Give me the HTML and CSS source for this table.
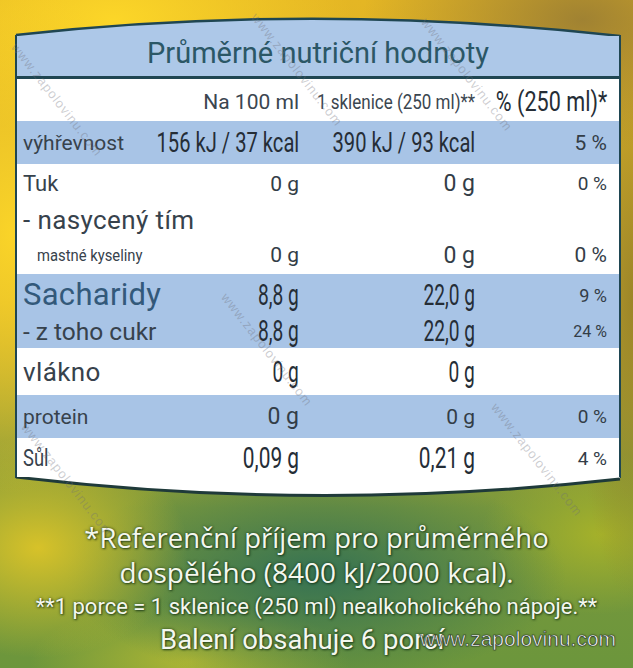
FILE: index.html
```html
<!DOCTYPE html>
<html lang="cs">
<head>
<meta charset="utf-8">
<title>Průměrné nutriční hodnoty</title>
<link rel="stylesheet" href="styles.css">
</head>
<body>
<div class="page">
  <svg class="cap cap-top" width="606" height="20" viewBox="0 0 606 20">
    <path d="M1 19 Q 300 -14 605 20 L605 20 L1 20 Z" fill="#adc8e8"/>
    <path d="M1 19 Q 300 -14 605 20" fill="none" stroke="#1f4652" stroke-width="2.5"/>
  </svg>
  <div class="card">
    <div class="title">Průměrné nutriční hodnoty</div>
    <div class="row head">
      <span></span>
      <span class="v n21">Na 100 ml</span>
      <span class="v"><span class="cond sk">1 sklenice (250 ml)**</span></span>
      <span class="v"><span class="cond pc">% (250 ml)*</span></span>
    </div>
    <div class="row band energy">
      <span class="lab s21">výhřevnost</span>
      <span class="v"><span class="cond kj">156 kJ / 37 kcal</span></span>
      <span class="v"><span class="cond kj">390 kJ / 93 kcal</span></span>
      <span class="v n20">5 %</span>
    </div>
    <div class="row tuk">
      <span class="lab s22">Tuk</span>
      <span class="v n20">0 g</span>
      <span class="v n22">0 g</span>
      <span class="v n18">0 %</span>
    </div>
    <div class="row nas">
      <span class="lab s26 wide">- nasycený tím</span>
    </div>
    <div class="row mast">
      <span class="lab"><span class="condl mk">mastné kyseliny</span></span>
      <span class="v n20">0 g</span>
      <span class="v n22">0 g</span>
      <span class="v n20">0 %</span>
    </div>
    <div class="band sach">
      <div class="row sub1">
        <span class="lab s31 blue">Sacharidy</span>
        <span class="v"><span class="cond c27">8,8 g</span></span>
        <span class="v"><span class="cond c27">22,0 g</span></span>
        <span class="v n17">9 %</span>
      </div>
      <div class="row sub2">
        <span class="lab s24">- z toho cukr</span>
        <span class="v"><span class="cond c27">8,8 g</span></span>
        <span class="v"><span class="cond c27">22,0 g</span></span>
        <span class="v n15">24 %</span>
      </div>
    </div>
    <div class="row vlak">
      <span class="lab s26">vlákno</span>
      <span class="v"><span class="cond c27">0 g</span></span>
      <span class="v"><span class="cond c27">0 g</span></span>
      <span class="v"></span>
    </div>
    <div class="row band prot">
      <span class="lab s21">protein</span>
      <span class="v n22">0 g</span>
      <span class="v n20">0 g</span>
      <span class="v n18">0 %</span>
    </div>
    <div class="row sul">
      <span class="lab"><span class="condl sl">Sůl</span></span>
      <span class="v"><span class="cond c28">0,09 g</span></span>
      <span class="v"><span class="cond c28">0,21 g</span></span>
      <span class="v n18">4 %</span>
    </div>
  </div>
  <svg class="cap cap-bottom" width="606" height="22" viewBox="0 0 606 22">
    <path d="M1 0 Q 300 36 605 2 L605 0 Z" fill="#ffffff"/>
    <path d="M1 0 Q 300 36 605 2" fill="none" stroke="#1f3a3a" stroke-width="3"/>
  </svg>
  <div class="foot">
    <p class="f1">*Referenční příjem pro průměrného</p>
    <p class="f2">dospělého (8400 kJ/2000 kcal).</p>
    <p class="f3">**1 porce = 1 sklenice (250 ml) nealkoholického nápoje.**</p>
    <p class="f4">Balení obsahuje 6 porcí</p>
  </div>
  <div class="wm wm1">www.zapolovinu.com</div>
  <div class="wm wm2">www.zapolovinu.com</div>
  <div class="wm wm3">www.zapolovinu.com</div>
  <div class="wm wm4">www.zapolovinu.com</div>
  <div class="wm wm5">www.zapolovinu.com</div>
  <div class="wm wm6">www.zapolovinu.com</div>
  <div class="site">www.zapolovinu.com</div>
</div>
</body>
</html>
```

FILE: styles.css
```css
html, body {
  margin: 0;
  padding: 0;
}
body {
  width: 633px;
  height: 668px;
  overflow: hidden;
  font-family: Roboto, "Noto Sans", sans-serif;
  background:
    radial-gradient(ellipse 150px 260px at 2% 35%, rgba(252, 214, 40, 0.95), rgba(252, 214, 40, 0) 100%),
    radial-gradient(ellipse 240px 120px at 18% 3%, rgba(252, 214, 40, 1), rgba(252, 214, 40, 0) 100%),
    radial-gradient(ellipse 220px 130px at 92% 3%, rgba(160, 130, 50, 1), rgba(160, 130, 50, 0) 100%),
    radial-gradient(ellipse 60px 300px at 100% 45%, rgba(150, 130, 40, 0.9), rgba(150, 130, 40, 0) 100%),
    radial-gradient(ellipse 150px 110px at 6% 82%, rgba(220, 196, 40, 0.95), rgba(220, 196, 40, 0) 100%),
    radial-gradient(ellipse 250px 110px at 50% 86%, rgba(50, 112, 84, 0.95), rgba(50, 112, 84, 0) 100%),
    radial-gradient(ellipse 120px 80px at 95% 80%, rgba(170, 180, 40, 0.9), rgba(170, 180, 40, 0) 100%),
    radial-gradient(ellipse 160px 60px at 30% 99%, rgba(190, 190, 50, 0.8), rgba(190, 190, 50, 0) 100%),
    linear-gradient(180deg, #e4b624 0%, #d2ab2c 45%, #7a983c 76%, #6c963c 100%);
}
.page {
  position: relative;
  width: 633px;
  height: 668px;
  padding: 16px 0 0 15px;
  box-sizing: border-box;
}
.cap {
  display: block;
}
.cap-top {
  margin-bottom: -1px;
}
.card {
  width: 606px;
  box-sizing: border-box;
  background: #ffffff;
  border-left: 2px solid #1f4652;
  border-right: 2px solid #1f4652;
  color: #3a4650;
}
.title {
  height: 41px;
  background: #adc8e8;
  border-bottom: 3px solid #1f4652;
  color: #2b5766;
  font-size: 29px;
  text-align: center;
  line-height: 36px;
}
.row {
  display: grid;
  grid-template-columns: 136px 140px 176px 132px;
  padding: 0 11px 0 6px;
  align-items: center;
}
.band {
  background: #a8c4e6;
}
.head { height: 42px; padding-top: 3px; box-sizing: border-box; }
.energy { height: 43px; }
.tuk { height: 39px; }
.nas { height: 33px; }
.mast { height: 38px; }
.sach { height: 74px; padding-top: 2px; box-sizing: border-box; }
.sub1 { height: 38px; }
.sub2 { height: 32px; }
.vlak { height: 47px; }
.prot { height: 43px; }
.sul { height: 40px; }

.lab {
  white-space: nowrap;
  color: #37424c;
}
.wide {
  grid-column: 1 / 3;
}
.v {
  display: flex;
  justify-content: flex-end;
  align-items: center;
  white-space: nowrap;
  color: #333d47;
}
.cond, .condl {
  display: inline-block;
  white-space: nowrap;
  color: #252d36;
  flex: none;
}
.cond { transform: scaleX(0.66); transform-origin: 100% 50%; }
.condl { transform-origin: 0 50%; color: #37424c; }

.s21 { font-size: 21px; }
.s22 { font-size: 22px; }
.s24 { font-size: 24.5px; }
.s26 { font-size: 26px; letter-spacing: 0.4px; }
.s31 { font-size: 31px; line-height: 32px; letter-spacing: 0.3px; }
.blue { color: #33597a; }
.n15 { font-size: 16px; }
.n17 { font-size: 18px; }
.n18 { font-size: 19px; }
.n20 { font-size: 21px; }
.n21 { font-size: 21px; color: #3b4650; }
.n22 { font-size: 23px; }

.sk { font-size: 20px; transform: scaleX(0.85); color: #3b4650; }
.pc { font-size: 27px; transform: scaleX(0.8); }
.kj { font-size: 28px; transform: scaleX(0.72); }
.mk { font-size: 17px; transform: scaleX(0.87); margin-left: 14px; }
.sl { font-size: 23px; transform: scaleX(0.8); }
.c27 { font-size: 29px; }
.c28 { font-size: 29px; transform: scaleX(0.72); }

.cap-bottom {
  margin-top: -1px;
}
.foot {
  margin: 21px 0 0 -15px;
  width: 633px;
  text-align: center;
  color: #f4f7ee;
  text-shadow: 0 0 3px rgba(20, 50, 20, 0.8), 1px 1px 2px rgba(20, 50, 20, 0.7);
}
.foot p {
  margin: 0;
  white-space: nowrap;
}
.f1 {
  font-family: "Open Sans", sans-serif;
  font-size: 27.5px;
  line-height: 35px;
}
.f2 {
  font-family: "Open Sans", sans-serif;
  font-size: 28px;
  line-height: 35px;
}
.f3 {
  font-size: 22px;
  line-height: 33px;
}
.f4 {
  font-size: 27.5px;
  line-height: 33px;
  text-align: left;
  padding-left: 160px;
}
.wm {
  position: absolute;
  font-family: "Liberation Sans", Arial, sans-serif;
  font-size: 13px;
  color: rgba(110, 110, 120, 0.35);
  transform: rotate(52deg);
  transform-origin: 0 0;
  white-space: nowrap;
  letter-spacing: 1px;
}
.wm1 { left: 20px; top: 40px; }
.wm2 { left: 260px; top: 10px; }
.wm3 { left: 430px; top: 15px; }
.wm4 { left: 230px; top: 290px; }
.wm5 { left: 500px; top: 400px; }
.wm6 { left: 30px; top: 420px; }
.site {
  position: absolute;
  left: 420px;
  top: 627px;
  font-family: "Liberation Sans", Arial, sans-serif;
  font-size: 21px;
  color: #ffffff;
  -webkit-text-stroke: 0.6px #2a3a2a;
  text-shadow: 0 0 2px rgba(0, 0, 0, 0.6);
}
```
